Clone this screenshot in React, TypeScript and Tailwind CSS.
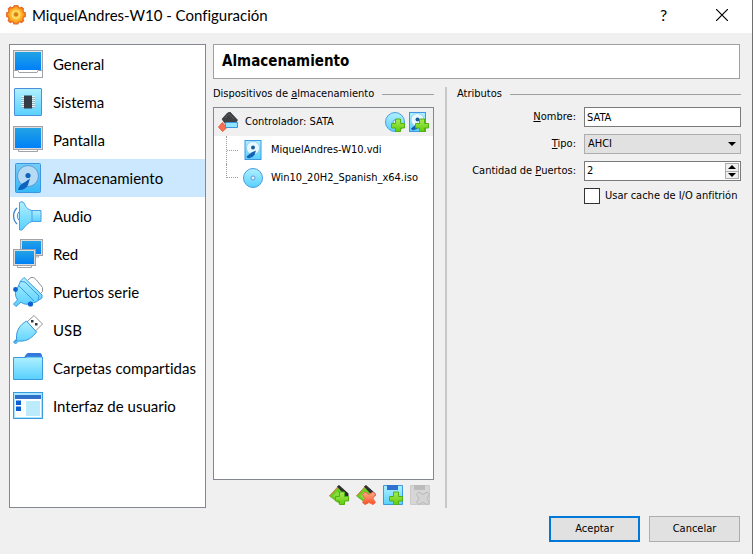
import { useState, type ReactNode } from "react";

function Gradients() {
  return (
    <svg className="absolute h-0 w-0" aria-hidden="true">
      <defs>
        <linearGradient id="screen" x1="0" y1="0" x2="0" y2="1">
          <stop offset="0" stopColor="#22a3e4" />
          <stop offset="1" stopColor="#0080f8" />
        </linearGradient>
        <linearGradient id="sky" x1="0" y1="0" x2="0" y2="1">
          <stop offset="0" stopColor="#b0f0ff" />
          <stop offset="1" stopColor="#58d0ff" />
        </linearGradient>
        <linearGradient id="disk" x1="0" y1="0" x2="0" y2="1">
          <stop offset="0" stopColor="#78cdf6" />
          <stop offset="1" stopColor="#36b8f8" />
        </linearGradient>
        <linearGradient id="leaf" x1="0" y1="0" x2="0" y2="1">
          <stop offset="0" stopColor="#a8ea5c" />
          <stop offset="1" stopColor="#62cc08" />
        </linearGradient>
        <linearGradient id="coral" x1="0" y1="0" x2="0" y2="1">
          <stop offset="0" stopColor="#ffb090" />
          <stop offset="1" stopColor="#f84c20" />
        </linearGradient>
        <radialGradient id="gear">
          <stop offset="0" stopColor="#ffe060" />
          <stop offset="0.6" stopColor="#ffb828" />
          <stop offset="1" stopColor="#f87820" />
        </radialGradient>
      </defs>
    </svg>
  );
}

function Icon({ size, children }: { size: 20 | 30; children: ReactNode }) {
  return (
    <svg
      viewBox={`0 0 ${size} ${size}`}
      className={`${size === 30 ? "size-[30px]" : "size-5"} shrink-0`}
      aria-hidden="true"
    >
      {children}
    </svg>
  );
}

function GeneralIcon() {
  return (
    <Icon size={30}>
      <rect x="0.5" y="1.5" width="29" height="27" fill="#e4e4e4" stroke="#a0a4a8" />
      <rect x="2" y="3" width="26" height="18" fill="url(#screen)" />
      <path d="M1 21h28v7H1z" fill="#fff" />
      <path d="M0.5 21.5h4.5l1 2h18l1-2h4.5" fill="none" stroke="#a0a4a8" />
    </Icon>
  );
}

function SystemIcon() {
  return (
    <Icon size={30}>
      <rect x="1.5" y="1.5" width="27" height="27" rx="0.5" fill="url(#sky)" stroke="#4b8fdc" />
      <path d="M8 9.500h14M8 11.500h14M8 13.500h14M8 15.500h14M8 17.500h14M8 19.500h14" stroke="#e6f2f6" />
      <path d="M8 10.500h14M8 12.500h14M8 14.500h14M8 16.500h14M8 18.500h14M8 20.500h14" stroke="#8eb4c2" />
      <rect x="11" y="8.500" width="8" height="13" fill="#343c48" />
    </Icon>
  );
}

function DisplayIcon() {
  return (
    <Icon size={30}>
      <path d="M5.5 24v2.5h19V24" fill="#fff" stroke="#a0a4a8" />
      <rect x="0.5" y="1.5" width="29" height="23" fill="#dcdcdc" stroke="#a0a4a8" />
      <rect x="2" y="3" width="26" height="20" fill="url(#screen)" />
    </Icon>
  );
}

function StorageIcon() {
  return (
    <Icon size={30}>
      <rect x="2.5" y="0.5" width="25" height="29" rx="1" fill="url(#disk)" stroke="#3a96e0" />
      <circle cx="15" cy="13" r="10.5" fill="#b6daf4" stroke="#4590d4" strokeWidth="0.8" />
      <circle cx="15" cy="12.5" r="2.6" fill="#0f63be" />
      <path d="m17 15.500-2 6.500c-2 4-5.500 5.500-10 5 1-4 3-6 7-8z" fill="#0f63be" />
    </Icon>
  );
}

function AudioIcon() {
  return (
    <Icon size={30}>
      <path d="M7 10C3.5 12 3.5 18 7 20z" fill="#c4ecfa" stroke="#4c8ed8" />
      <path d="M4 7C-0.5 11-0.5 19 4 23" fill="none" stroke="#3d83cc" strokeWidth="1.3" />
      <path d="M18 9.5h10v11H18z" fill="url(#sky)" stroke="#4aa0e4" />
      <path d="M6.5 1.5Q9-0.5 11 2c2 5 4 6.5 8 7.500v11c-4 1-6 4-10 8.500h-2.500z" fill="url(#sky)" stroke="#4aa0e4" />
    </Icon>
  );
}

function NetworkIcon() {
  return (
    <Icon size={30}>
      <path d="M22.5 16v2h3v-2" fill="#fff" stroke="#a0a4a8" />
      <rect x="7.5" y="0.5" width="22" height="16" fill="#dcdcdc" stroke="#a0a4a8" />
      <rect x="9" y="2" width="19" height="13" fill="url(#screen)" />
      <path d="M4.5 26v2.5h14V26" fill="#fff" stroke="#a0a4a8" />
      <rect x="0.5" y="10.5" width="22" height="16" fill="#dcdcdc" stroke="#a0a4a8" />
      <rect x="2" y="12" width="19" height="13" fill="url(#screen)" />
    </Icon>
  );
}

function SerialIcon() {
  return (
    <Icon size={30}>
      <path d="m15 3 3-2.500q3-1 5 2l6.500 8v4l-3 3" fill="#fff" stroke="#8e9296" />
      <path d="M5 10 7.500 4l3.500-3.500L29 18v3l-6 4-4 1q-7 3-11-1l-5 4.500L0.500 27l4-4Q0 16 5 10z" fill="url(#sky)" stroke="#3a9ae0" />
      <path d="M7.500 4.500 12 5l14 14-1 4M6 9l15 15" fill="none" stroke="#3a9ae0" />
      <circle cx="2.500" cy="12.500" r="2.400" fill="#0c62d0" />
      <circle cx="17.500" cy="27" r="2.600" fill="#0c62d0" />
    </Icon>
  );
}

function UsbIcon() {
  return (
    <Icon size={30}>
      <path d="m14 7 7-6.500 8.500 8.500-7 7z" fill="#fff" stroke="#8e9296" />
      <path d="M18 5h2.500v2.500H18zM22 8h2.500v2.500H22z" fill="#303840" />
      <path d="m13.500 6 10 11c-4 5-9 10-18 9l-3 3L0.500 27l3-3C3 15 7 10 13.500 6z" fill="url(#sky)" stroke="#3a96e0" />
      <path d="m1.500 27 3-2" stroke="#2a80d0" />
    </Icon>
  );
}

function FolderIcon() {
  return (
    <Icon size={30}>
      <path d="M11 5q2-4.500 4-5h12.500L29 2v4H11z" fill="#3278dc" />
      <path d="M0.5 4.5H11q2 0 3-0.500h15.500v22.500h-29z" fill="url(#sky)" stroke="#3a9ae0" />
    </Icon>
  );
}

function InterfaceIcon() {
  return (
    <Icon size={30}>
      <rect x="0.5" y="1.5" width="29" height="26" fill="#a8e6ff" stroke="#3a9ae0" />
      <rect x="2" y="8" width="26" height="18" fill="#fff" />
      <path d="M2 4h26v4H2z" fill="#2f70c8" />
      <path d="M3 9.500h5v4.500H3zM3 15.500h5V20H3z" fill="#0c5fd0" />
      <path d="M13 10h14v15H13z" fill="#bcecfc" />
    </Icon>
  );
}

function GearIcon() {
  return (
    <Icon size={20}>
      <path
        d="m8 1 1.200-.5h1.600L12 1l.5 1.500 1.500.5 1.600-.8L17.500 4l-.6 1.700.7 1.500 1.700.6v3.800l-1.700.7-.7 1.500.7 1.700-2 2-1.600-.8-1.500.6-.7 1.700H8l-.7-1.700-1.500-.6-1.600.8-2-2 .8-1.700-.6-1.500-1.700-.7V7.800l1.700-.6L3 5.700 2.300 4l2-2 1.600.9 1.500-.5z"
        fill="url(#gear)"
        stroke="#e46c20"
        strokeWidth="1.200"
      />
      <circle cx="10" cy="9.500" r="4" fill="none" stroke="#ffe884" />
      <circle cx="10" cy="9.500" r="1.700" fill="#e88018" stroke="#b86818" strokeWidth="0.7" />
    </Icon>
  );
}

function PlusBadge() {
  return <path d="M10.500 7h5v4.500h4v4.500h-4v3.500h-5V16h-4v-4.500h4z" fill="url(#leaf)" stroke="#52b010" />;
}

function CrossBadge({ muted = false }: { muted?: boolean }) {
  return (
    <path
      d="m9 7 4 2.500L17 7l2.500 2.500-2.500 4 2.500 4-2.500 2-4-2-4 2-2.500-2 2.500-4-2.500-4z"
      fill={muted ? "#d4d4d4" : "url(#coral)"}
      stroke={muted ? "#b8b8b8" : "#ec6c48"}
    />
  );
}

function DiscIcon({ add = false }: { add?: boolean }) {
  return (
    <Icon size={20}>
      <circle cx="10" cy="10" r="9.5" fill="url(#sky)" stroke="#4b9ce0" />
      <circle cx="10" cy="10" r="2" fill="#dff4ff" stroke="#5a94d0" strokeWidth="0.9" />
      {add && <PlusBadge />}
    </Icon>
  );
}

function HardDiskDrawing() {
  return (
    <>
      <rect x="2" y="0.5" width="16" height="19" fill="url(#sky)" stroke="#3f98e0" />
      <circle cx="10" cy="8" r="6.5" fill="#e8f8ff" stroke="#7cc0ec" strokeWidth="0.6" />
      <circle cx="10" cy="7.5" r="2" fill="#1c5a9c" />
      <path d="M13 10.500 11.500 15q-3 4-7 3l-1-1.500 5-4z" fill="#1460b4" />
    </>
  );
}

function HardDiskIcon({ add = false }: { add?: boolean }) {
  return (
    <Icon size={20}>
      {add ? (
        <>
          <g transform="translate(-1.5)">
            <HardDiskDrawing />
          </g>
          <PlusBadge />
        </>
      ) : (
        <HardDiskDrawing />
      )}
    </Icon>
  );
}

function ControllerIcon() {
  return (
    <Icon size={20}>
      <path d="m4 7 5.500-6L12 0l7.500 8-2 3.500H7z" fill="#3e4042" stroke="#242628" strokeWidth="0.6" />
      <path d="m7 6 4-4 5 5" fill="none" stroke="#5a5c5e" />
      <path d="m4.500 10.500 4 5.500-4 3.500L0.500 15z" fill="#f87050" stroke="#d84c30" strokeWidth="0.8" />
      <path d="M7.5 10.500h12v5h-12z" fill="#90e4ff" stroke="#3a96d8" />
    </Icon>
  );
}

function AddControllerIcon({ remove = false }: { remove?: boolean }) {
  return (
    <Icon size={20}>
      <path d="M0.500 11 9.500 1l9 8-7.500 10z" fill="#6ccc24" stroke="#50a010" strokeWidth="0.6" />
      <path d="M0.500 11 9.500 1.500" stroke="#e87848" />
      <path d="m4 11 4-4.500 5 4-4 5z" fill="#84dc3c" />
      <path d="m8 1.500 2-1.500 9.500 8.500V11h-3z" fill="#2c2e30" />
      {remove ? <CrossBadge /> : <PlusBadge />}
    </Icon>
  );
}

function FloppyIcon({ muted = false }: { muted?: boolean }) {
  return (
    <Icon size={20}>
      <path d="M0.5 0.500h19v19h-19z" fill={muted ? "#d6d6d6" : "url(#sky)"} stroke={muted ? "#cacaca" : "#3a9ae0"} />
      <path d="M4 0h11v5H4z" fill={muted ? "#bcbcbc" : "#2f70d0"} />
      {muted ? <CrossBadge muted /> : <PlusBadge />}
    </Icon>
  );
}

const sections: { name: string; icon: ReactNode }[] = [
  { name: "General", icon: <GeneralIcon /> },
  { name: "Sistema", icon: <SystemIcon /> },
  { name: "Pantalla", icon: <DisplayIcon /> },
  { name: "Almacenamiento", icon: <StorageIcon /> },
  { name: "Audio", icon: <AudioIcon /> },
  { name: "Red", icon: <NetworkIcon /> },
  { name: "Puertos serie", icon: <SerialIcon /> },
  { name: "USB", icon: <UsbIcon /> },
  { name: "Carpetas compartidas", icon: <FolderIcon /> },
  { name: "Interfaz de usuario", icon: <InterfaceIcon /> },
];

function TitleBar() {
  return (
    <header className="flex h-[33px] shrink-0 items-center bg-white pb-1 pl-1.5">
      <GearIcon />
      <h1 className="ml-1.5 flex-1 text-[15px] leading-5">MiquelAndres-W10 - Configuración</h1>
      <button type="button" aria-label="Ayuda" className="h-7 w-[57px] text-base leading-7">?</button>
      <button type="button" aria-label="Cerrar" className="flex h-7 w-[60px] items-center justify-center">
        <svg viewBox="0 0 12 12" className="size-3" aria-hidden="true">
          <path d="m0 0 12 12M12 0 0 12" stroke="#000" strokeWidth="1.200" />
        </svg>
      </button>
    </header>
  );
}

function Sidebar() {
  const [active, setActive] = useState("Almacenamiento");
  return (
    <nav className="w-[197px] shrink-0 border border-[#828790] bg-white">
      {sections.map(({ name, icon }) => (
        <button
          key={name}
          type="button"
          onClick={() => setActive(name)}
          className={`flex h-[38px] w-full items-center gap-2.5 pl-[3px] text-left text-[15px] leading-5 whitespace-nowrap ${
            active === name ? "bg-[#cce8ff]" : ""
          }`}
        >
          {icon}
          {name}
        </button>
      ))}
    </nav>
  );
}

function GroupTitle({ children }: { children: ReactNode }) {
  return (
    <h3 className="flex h-5 items-center gap-2 whitespace-nowrap after:h-px after:flex-1 after:bg-[#a0a0a0]">
      <span>{children}</span>
    </h3>
  );
}

function TreeItem({ icon, name, last = false }: { icon: ReactNode; name: string; last?: boolean }) {
  return (
    <li className="flex h-7 items-center pl-3">
      <span className={`flex w-3 self-stretch ${last ? "flex-col" : "items-center border-l border-dotted border-[#a0a0a0]"}`}>
        <span className={last ? "h-3.5 border-b border-l border-dotted border-[#a0a0a0]" : "flex-1 border-b border-dotted border-[#a0a0a0]"} />
      </span>
      <span className="mr-2 ml-[5px] flex">{icon}</span>
      {name}
    </li>
  );
}

function Devices() {
  return (
    <section className="flex w-[221px] shrink-0 flex-col">
      <GroupTitle>
        Dispositivos de <u>a</u>lmacenamiento
      </GroupTitle>
      <ul className="mt-[3px] flex-1 border border-[#828790] bg-white">
        <li>
          <div className="flex h-7 items-center bg-[#f0f0f0] pr-1 pl-1">
            <ControllerIcon />
            <span className="ml-[7px] flex-1">Controlador: SATA</span>
            <button type="button" aria-label="Añadir unidad óptica" className="mr-1">
              <DiscIcon add />
            </button>
            <button type="button" aria-label="Añadir disco duro">
              <HardDiskIcon add />
            </button>
          </div>
          <ul>
            <TreeItem icon={<HardDiskIcon />} name="MiquelAndres-W10.vdi" />
            <TreeItem icon={<DiscIcon />} name="Win10_20H2_Spanish_x64.iso" last />
          </ul>
        </li>
      </ul>
      <div className="flex justify-end gap-[7px] pt-[5px] pr-1 pb-[3px]">
        <button type="button" aria-label="Añadir controlador"><AddControllerIcon /></button>
        <button type="button" aria-label="Eliminar controlador"><AddControllerIcon remove /></button>
        <button type="button" aria-label="Añadir conexión"><FloppyIcon /></button>
        <button type="button" aria-label="Eliminar conexión" disabled><FloppyIcon muted /></button>
      </div>
    </section>
  );
}

function Arrow({ up = false }: { up?: boolean }) {
  return (
    <svg viewBox="0 0 8 4" className="h-1 w-2" aria-hidden="true">
      <path d={up ? "M4 0 8 4H0z" : "M0 0h8L4 4z"} />
    </svg>
  );
}

function Attributes() {
  const [name, setName] = useState("SATA");
  const [ports, setPorts] = useState(2);
  const [cache, setCache] = useState(false);
  return (
    <section className="min-w-0 flex-1 pl-2.5">
      <GroupTitle>Atributos</GroupTitle>
      <form className="mt-[3px] grid grid-cols-[119px_minmax(0,1fr)] items-center gap-x-2 gap-y-[7px]">
        <label htmlFor="name" className="text-right"><u>N</u>ombre:</label>
        <input
          id="name"
          value={name}
          onChange={(e) => setName(e.target.value)}
          className="h-5 w-full min-w-0 border border-[#7a7a7a] bg-white px-0.5 outline-none"
        />
        <label htmlFor="type" className="text-right"><u>T</u>ipo:</label>
        <div className="grid items-center">
          <select id="type" className="col-start-1 row-start-1 h-5 w-full appearance-none border border-[#adadad] bg-[#e1e1e1] px-[3px] outline-none">
            <option>AHCI</option>
          </select>
          <span className="pointer-events-none col-start-1 row-start-1 mr-[5px] flex justify-self-end"><Arrow /></span>
        </div>
        <label htmlFor="ports" className="text-right">Cantidad de <u>P</u>uertos:</label>
        <div className="flex h-5 border border-[#7a7a7a] bg-white p-px">
          <input
            id="ports"
            inputMode="numeric"
            value={ports}
            onChange={(e) => setPorts(Number(e.target.value) || 1)}
            className="w-full min-w-0 flex-1 px-px outline-none"
          />
          <span className="flex w-3.5 shrink-0 flex-col">
            <button type="button" aria-label="Aumentar" onClick={() => setPorts(ports + 1)} className="flex flex-1 items-center justify-center border border-[#adadad] bg-[#f0f0f0]">
              <Arrow up />
            </button>
            <button type="button" aria-label="Disminuir" onClick={() => setPorts(Math.max(1, ports - 1))} className="flex flex-1 items-center justify-center border border-t-0 border-[#adadad] bg-[#f0f0f0]">
              <Arrow />
            </button>
          </span>
        </div>
        <label className="col-start-2 flex items-center gap-[5px] whitespace-nowrap">
          <input
            type="checkbox"
            checked={cache}
            onChange={(e) => setCache(e.target.checked)}
            className="size-4 shrink-0 appearance-none border border-[#333] bg-white checked:bg-[#0078d7]"
          />
          Usar cache de I/O anfitrión
        </label>
      </form>
    </section>
  );
}

export default function App() {
  return (
    <div className="flex min-h-screen flex-col border-r border-[#707070] bg-[#f0f0f0] font-[Lato,'Open_Sans',sans-serif] text-black [font-variant-ligatures:none]">
      <Gradients />
      <TitleBar />
      <div className="flex flex-1 gap-[7px] pt-[11px] pr-[11px] pl-[9px]">
        <Sidebar />
        <main className="flex min-w-0 flex-1 flex-col font-['DejaVu_Sans_Condensed','DejaVu_Sans',sans-serif] text-[11px] leading-4">
          <h2 className="mr-px border border-[#a0a0a0] bg-white px-2 py-1.5 text-[15px] leading-[21px] font-bold">
            Almacenamiento
          </h2>
          <div className="flex flex-1 pt-[5px]">
            <Devices />
            <div className="mt-[3px] ml-[11px] w-0.5 bg-[#c8c8c8]" />
            <Attributes />
          </div>
        </main>
      </div>
      <footer className="flex justify-end gap-[9px] pt-2 pr-3 pb-3 font-['DejaVu_Sans_Condensed','DejaVu_Sans',sans-serif] text-[11px] leading-4">
        <button type="button" className="h-[26px] w-[91px] border-2 border-[#0078d7] bg-[#e1e1e1]">Aceptar</button>
        <button type="button" className="h-[26px] w-[91px] border border-[#adadad] bg-[#e1e1e1]">Cancelar</button>
      </footer>
    </div>
  );
}
